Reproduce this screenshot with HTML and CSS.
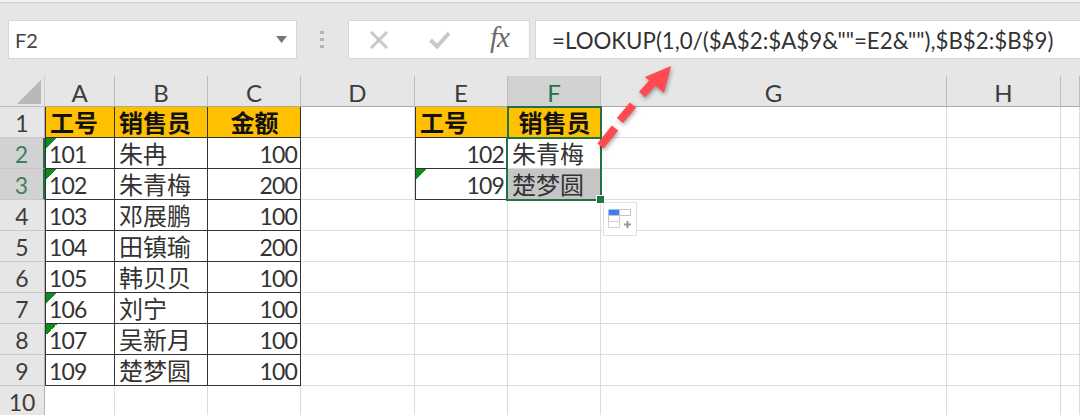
FILE: index.html
```html
<!DOCTYPE html>
<html lang="zh">
<head>
<meta charset="utf-8">
<title>LOOKUP</title>
<link rel="stylesheet" href="styles.css">
</head>
<body>
<div class="app">
  <div class="topline"></div>
  <div class="toolbar">
    <div class="namebox"><span>F2</span>
      <svg class="caret" width="11" height="7" viewBox="0 0 11 7"><path d="M0 0H11L5.500 7Z" fill="#777"/></svg>
    </div>
    <svg class="dots" width="5" height="17" viewBox="0 0 5 17"><g fill="#b4b4b4"><rect x="0" y="0" width="4" height="3"/><rect x="0" y="7" width="4" height="3"/><rect x="0" y="14" width="4" height="3"/></g></svg>
    <div class="fnbox">
      <svg class="ico-x" width="20" height="18" viewBox="0 0 20 18"><path d="M2 1L18 17M18 1L2 17" stroke="#c9c9c9" stroke-width="3" fill="none"/></svg>
      <svg class="ico-c" width="21" height="18" viewBox="0 0 21 18"><path d="M1.500 9L8 15.500L20 2" stroke="#c9c9c9" stroke-width="4" fill="none"/></svg>
      <span class="fx">fx</span>
    </div>
    <div class="formula">=LOOKUP(1,0/($A$2:$A$9&amp;""=E2&amp;""),$B$2:$B$9)</div>
  </div>
  <div class="sheet">
    <div class="corner"><svg width="45" height="31" viewBox="0 0 45 31"><path d="M17 28H41V4Z" fill="#b8b8b8"/></svg></div>
    <div class="ch">A</div><div class="ch">B</div><div class="ch">C</div><div class="ch">D</div><div class="ch">E</div><div class="ch sel">F</div><div class="ch">G</div><div class="ch">H</div><div class="ch"></div>

    <div class="rh">1</div>
    <div class="c h b lb">工号</div><div class="c h b">销售员</div><div class="c h b ctr">金额</div><div class="c"></div><div class="c h b lb">工号</div><div class="c h ctr act">销售员</div><div class="c"></div><div class="c"></div><div class="c"></div>

    <div class="rh sel">2</div>
    <div class="c b lb n tri">101</div><div class="c b">朱冉</div><div class="c b r n">100</div><div class="c"></div><div class="c b lb r n">102</div><div class="c">朱青梅</div><div class="c"></div><div class="c"></div><div class="c"></div>

    <div class="rh sel">3</div>
    <div class="c b lb n tri">102</div><div class="c b">朱青梅</div><div class="c b r n">200</div><div class="c"></div><div class="c b lb r n tri">109</div><div class="c gray">楚梦圆</div><div class="c"></div><div class="c"></div><div class="c"></div>

    <div class="rh">4</div>
    <div class="c b lb n">103</div><div class="c b">邓展鹏</div><div class="c b r n">100</div><div class="c"></div><div class="c"></div><div class="c"></div><div class="c"></div><div class="c"></div><div class="c"></div>

    <div class="rh">5</div>
    <div class="c b lb n">104</div><div class="c b">田镇瑜</div><div class="c b r n">200</div><div class="c"></div><div class="c"></div><div class="c"></div><div class="c"></div><div class="c"></div><div class="c"></div>

    <div class="rh">6</div>
    <div class="c b lb n">105</div><div class="c b">韩贝贝</div><div class="c b r n">100</div><div class="c"></div><div class="c"></div><div class="c"></div><div class="c"></div><div class="c"></div><div class="c"></div>

    <div class="rh">7</div>
    <div class="c b lb n tri">106</div><div class="c b">刘宁</div><div class="c b r n">100</div><div class="c"></div><div class="c"></div><div class="c"></div><div class="c"></div><div class="c"></div><div class="c"></div>

    <div class="rh">8</div>
    <div class="c b lb n tri">107</div><div class="c b">吴新月</div><div class="c b r n">100</div><div class="c"></div><div class="c"></div><div class="c"></div><div class="c"></div><div class="c"></div><div class="c"></div>

    <div class="rh">9</div>
    <div class="c b lb n">109</div><div class="c b">楚梦圆</div><div class="c b r n">100</div><div class="c"></div><div class="c"></div><div class="c"></div><div class="c"></div><div class="c"></div><div class="c"></div>

    <div class="rh last">10</div>
    <div class="c"></div><div class="c"></div><div class="c"></div><div class="c"></div><div class="c"></div><div class="c"></div><div class="c"></div><div class="c"></div><div class="c"></div>

    <div class="selection"><i class="handle"></i></div>
    <div class="paste">
      <svg width="32" height="32" viewBox="0 0 32 32">
        <rect x="4.500" y="6.500" width="11" height="6" fill="#3f7fe8"/>
        <rect x="15.500" y="6.500" width="11" height="6" fill="#fff" stroke="#c4c4c4"/>
        <rect x="4.500" y="12.500" width="11" height="6" fill="#fff" stroke="#c4c4c4"/>
        <rect x="4.500" y="18.500" width="11" height="6" fill="#fff" stroke="#d4d4d4"/>
        <path d="M20 21.500H27M23.500 18V25" stroke="#9a9a9a" stroke-width="2" fill="none"/>
      </svg>
    </div>
  </div>
  <svg class="arrow" width="90" height="100" viewBox="0 0 90 100">
    <g transform="translate(-590 -60)">
      <path d="M600.500 146L615 128M620 120.500L633 105M642 94.500L655 80" stroke="#ff4b4f" stroke-width="8" fill="none"/>
      <path d="M671 66L645 77L664 93Z" fill="#ff4b4f"/>
    </g>
  </svg>
</div>
</body>
</html>
```
FILE: styles.css
```css
* { box-sizing: border-box; }
html, body { margin: 0; padding: 0; background: #fff; }
body { font-family: Lato, "Noto Sans CJK SC", sans-serif; color: #262626; }
.app { position: relative; width: 1080px; height: 415px; overflow: hidden; }
.topline { height: 3px; background: #f4f4f4; border-bottom: 1px solid #cfcfcf; }
.toolbar {
  height: 73px; background: #e6e6e6; padding: 17px 0 0 8px;
  display: flex; align-items: flex-start;
}
.namebox {
  width: 289px; height: 39px; background: #fff; border: 1px solid #d6d6d6;
  display: flex; align-items: center; justify-content: space-between;
  padding: 0 9px 0 6px; font-size: 20px; color: #444;
}
.dots { margin: 11px 0 0 23px; }
.fnbox {
  position: relative; width: 182px; height: 39px; margin-left: 23px;
  background: #fff; border: 1px solid #d6d6d6;
  display: flex; align-items: center;
}
.ico-x { margin-left: 20px; }
.ico-c { margin-left: 40px; }
.fx {
  margin-left: 40px; font: italic 29px "Liberation Serif", serif; color: #6a6a6a;
  letter-spacing: -1px; position: relative; top: -2px;
}
.formula {
  flex: 1; height: 39px; margin-left: 5px; background: #fff;
  border: 1px solid #d6d6d6; border-right: 0;
  padding-left: 16px; line-height: 39px; font-size: 22.300px; color: #333;
  white-space: nowrap;
}
.sheet {
  position: relative; display: grid;
  grid-template-columns: 45px 70px 93px 93px 114px 93px 93px 346px 114px 19px;
  grid-auto-rows: 31px;
}
.corner { background: #e6e6e6; border-bottom: 1px solid #bdbdbd; border-right: 1px solid #cfcfcf; }
.corner svg { display: block; }
.ch {
  background: #e6e6e6; border-right: 1px solid #bdbdbd; border-bottom: 1px solid #a9a9a9;
  text-align: center; font-size: 24px; line-height: 33px; color: #3c3c3c;
}
.ch.sel { background: #d2d2d2; color: #217346; }
.rh {
  background: #e6e6e6; border-bottom: 1px solid #c9c9c9; border-right: 1px solid #b5b5b5;
  text-align: center; font-size: 23px; line-height: 33px; color: #3c3c3c;
}
.rh.sel { background: #d2d2d2; color: #3f8060; border-right: 2px solid #217346; }
.rh.last { border-bottom: 0; line-height: 26px; padding-top: 3px; }
.c {
  position: relative; border-right: 1px solid #dcdcdc; border-bottom: 1px solid #dcdcdc;
  padding: 0 3px 0 4px; font-size: 24px; line-height: 32px; color: #333;
  white-space: nowrap; overflow: hidden;
}
.c.b { border-right-color: #333; border-bottom-color: #333; }
.c.lb { border-left: 1px solid #333; padding-left: 3px; }
.c.n { font-size: 23px; letter-spacing: -0.800px; line-height: 33px; }
.c.r { text-align: right; }
.c.h { background: #ffc000; font-weight: 700; color: #111; }
.c.h.lb { padding-left: 4px; }
.c.ctr { text-align: center; }
.c.act {
  z-index: 1; overflow: visible; border-color: transparent;
  outline: 2px solid #217346; outline-offset: -1px;
}
.c.gray { background: #c6c6c6; }
.c.tri::before {
  content: ""; position: absolute; left: 0; top: 0; width: 11px; height: 11px;
  background: linear-gradient(135deg, #0f8a1c 50%, transparent 50%);
}
.selection {
  position: absolute; left: 506px; top: 61px; width: 96px; height: 64px; z-index: 2;
  border: 2px solid #217346; pointer-events: none;
}
.handle {
  position: absolute; right: -4px; bottom: -4px; width: 7px; height: 7px;
  background: #217346; outline: 1px solid #fff;
}
.paste {
  position: absolute; left: 603px; top: 126px; width: 34px; height: 34px;
  background: #fff; border: 1px solid #e0e0e0;
}
.paste svg { display: block; }
.arrow {
  position: absolute; left: 590px; top: 60px; z-index: 3;
  filter: drop-shadow(1px 2px 2px rgba(0,0,0,.35));
}
```
